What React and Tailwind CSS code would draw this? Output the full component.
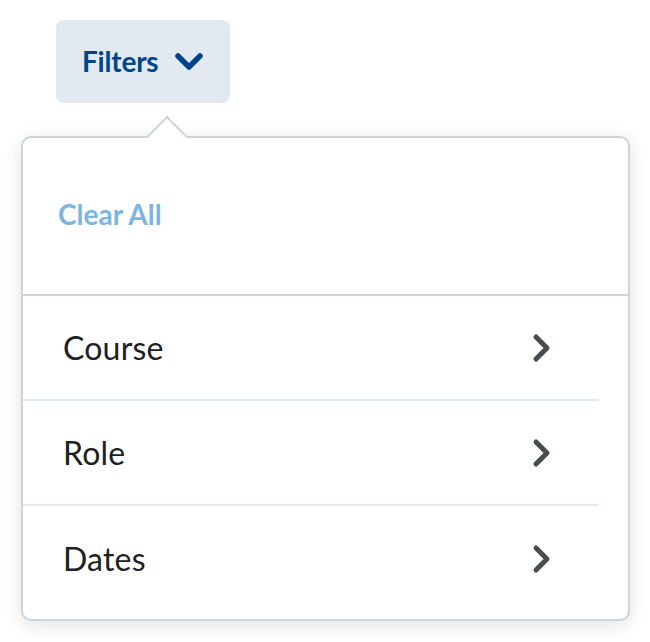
const items = ["Course", "Role", "Dates"];

function ChevronDown() {
  return (
    <svg width="30" height="20" viewBox="0 0 30 20" fill="none">
      <path d="M4 5l11 11L26 5" stroke="#004489" strokeWidth="5.5" strokeLinecap="round" strokeLinejoin="round" />
    </svg>
  );
}

function ChevronRight() {
  return (
    <svg width="20" height="32" viewBox="0 0 20 32" fill="none">
      <path d="M5 5l11 11L5 27" stroke="#494c4e" strokeWidth="5" strokeLinecap="round" strokeLinejoin="round" />
    </svg>
  );
}

export default function App() {
  return (
    <div className="min-h-screen bg-white font-['Lato','Noto_Sans',sans-serif] pt-[20px]">
      {/* Filters button */}
      <button className="ml-[56px] w-[174px] h-[83px] rounded-[8px] bg-[#e3e9f1] flex items-center pl-[26px] pb-[2px] gap-[16px]">
        <span className="text-[28px] font-bold text-[#004489] tracking-[-0.2px]">Filters</span>
        <ChevronDown />
      </button>

      {/* Dropdown panel */}
      <div className="relative ml-[21px] mt-[33px] w-[609px] h-[485px] rounded-[10px] border-2 border-[#cdd5dc] bg-white shadow-[0_4px_18px_rgba(0,0,0,0.12)]">
        <div className="absolute left-[129px] top-[-16px] w-[30px] h-[30px] rotate-45 bg-white border-t-2 border-l-2 border-[#cdd5dc]" />

        <div className="relative h-[158px] flex items-center pl-[35px] pb-[4px] border-b-2 border-[#cdd5dc]">
          <span className="text-[28px] font-bold text-[#7cb6e0]">Clear All</span>
        </div>

        <div className="pr-[29px]">
          {items.map((label, i) => (
            <div
              key={label}
              className={`h-[105px] flex items-center justify-between pl-[40px] pr-[48px] ${
                i < items.length - 1 ? "border-b-2 border-[#e3e9f1]" : ""
              }`}
            >
              <span className="text-[32px] text-[#202122] tracking-[0.2px]">{label}</span>
              <ChevronRight />
            </div>
          ))}
        </div>
      </div>
    </div>
  );
}
